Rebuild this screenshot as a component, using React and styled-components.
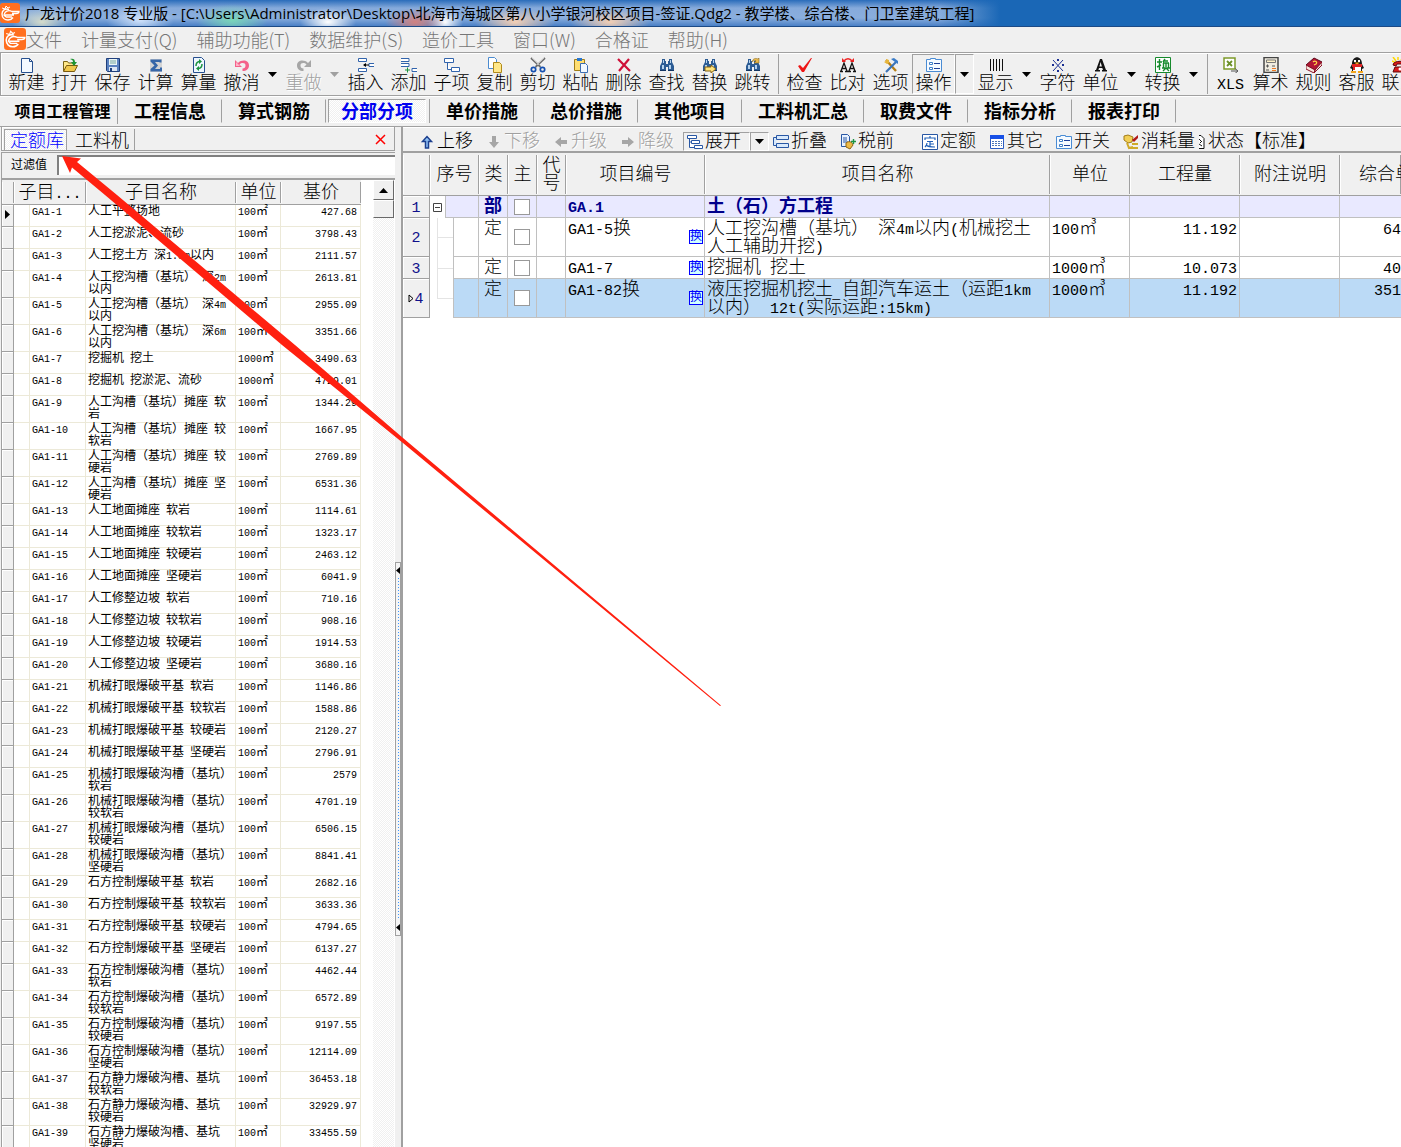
import React, { useState } from 'react'
import styled, { createGlobalStyle, css } from 'styled-components'

const song = '"Liberation Mono", "Noto Sans CJK SC", monospace'
const hei = '"Open Sans", "Noto Sans CJK SC", sans-serif'
const menuFont = '"Noto Sans CJK SC", sans-serif'

const checker = css`
  background: conic-gradient(#fff 25%, #f0f0f0 0 50%, #fff 0 75%, #f0f0f0 0) 0 0 / 2px 2px;
`

const GlobalStyle = createGlobalStyle`
  * { box-sizing: border-box; }
  body {
    margin: 0;
    background: #f0f0f0;
    color: #000;
    font: 300 18px/18px ${song};
    text-spacing-trim: space-all;
  }
  button {
    border: 0;
    padding: 0;
    background: none;
    color: inherit;
    font: inherit;
    white-space: nowrap;
  }
`

const quotas = [
  ['人工平整场地', '㎡', '427.68'],
  ['人工挖淤泥、流砂', '㎥', '3798.43'],
  ['人工挖土方 深1.5m以内', '㎥', '2111.57'],
  ['人工挖沟槽（基坑） 深2m以内', '㎥', '2613.81'],
  ['人工挖沟槽（基坑） 深4m以内', '㎥', '2955.09'],
  ['人工挖沟槽（基坑） 深6m以内', '㎥', '3351.66'],
  ['挖掘机 挖土', '㎥', '3490.63', '1000'],
  ['挖掘机 挖淤泥、流砂', '㎥', '4729.01', '1000'],
  ['人工沟槽（基坑）摊座 软岩', '㎡', '1344.29'],
  ['人工沟槽（基坑）摊座 较软岩', '㎡', '1667.95'],
  ['人工沟槽（基坑）摊座 较硬岩', '㎡', '2769.89'],
  ['人工沟槽（基坑）摊座 坚硬岩', '㎡', '6531.36'],
  ['人工地面摊座 软岩', '㎡', '1114.61'],
  ['人工地面摊座 较软岩', '㎡', '1323.17'],
  ['人工地面摊座 较硬岩', '㎡', '2463.12'],
  ['人工地面摊座 坚硬岩', '㎡', '6041.9'],
  ['人工修整边坡 软岩', '㎡', '710.16'],
  ['人工修整边坡 较软岩', '㎡', '908.16'],
  ['人工修整边坡 较硬岩', '㎡', '1914.53'],
  ['人工修整边坡 坚硬岩', '㎡', '3680.16'],
  ['机械打眼爆破平基 软岩', '㎥', '1146.86'],
  ['机械打眼爆破平基 较软岩', '㎥', '1588.86'],
  ['机械打眼爆破平基 较硬岩', '㎥', '2120.27'],
  ['机械打眼爆破平基 坚硬岩', '㎥', '2796.91'],
  ['机械打眼爆破沟槽（基坑） 软岩', '㎥', '2579'],
  ['机械打眼爆破沟槽（基坑） 较软岩', '㎥', '4701.19'],
  ['机械打眼爆破沟槽（基坑） 较硬岩', '㎥', '6506.15'],
  ['机械打眼爆破沟槽（基坑） 坚硬岩', '㎥', '8841.41'],
  ['石方控制爆破平基 软岩', '㎥', '2682.16'],
  ['石方控制爆破平基 较软岩', '㎥', '3633.36'],
  ['石方控制爆破平基 较硬岩', '㎥', '4794.65'],
  ['石方控制爆破平基 坚硬岩', '㎥', '6137.27'],
  ['石方控制爆破沟槽（基坑） 软岩', '㎥', '4462.44'],
  ['石方控制爆破沟槽（基坑） 较软岩', '㎥', '6572.89'],
  ['石方控制爆破沟槽（基坑） 较硬岩', '㎥', '9197.55'],
  ['石方控制爆破沟槽（基坑） 坚硬岩', '㎥', '12114.09'],
  ['石方静力爆破沟槽、基坑 较软岩', '㎥', '36453.18'],
  ['石方静力爆破沟槽、基坑 较硬岩', '㎥', '32929.97'],
  ['石方静力爆破沟槽、基坑 坚硬岩', '㎥', '33455.59']
]

const items = [
  { kind: '部', code: 'GA.1', name: '土（石）方工程', section: true },
  { kind: '定', code: 'GA1-5换', name: '人工挖沟槽（基坑） 深4m以内(机械挖土人工辅助开挖)', unit: '100㎥', qty: '11.192', price: '64', swap: true },
  { kind: '定', code: 'GA1-7', name: '挖掘机 挖土', unit: '1000㎥', qty: '10.073', price: '40', swap: true },
  { kind: '定', code: 'GA1-82换', name: '液压挖掘机挖土 自卸汽车运土（运距1km以内） 12t(实际运距:15km)', unit: '1000㎥', qty: '11.192', price: '351', swap: true, current: true }
]

const menus = ['文件', '计量支付(Q)', '辅助功能(T)', '数据维护(S)', '造价工具', '窗口(W)', '合格证', '帮助(H)']

const sections = ['工程信息', '算式钢筋', '分部分项', '单价措施', '总价措施', '其他项目', '工料机汇总', '取费文件', '指标分析', '报表打印']

const mainTools = [
  { icon: 'file', label: '新建' },
  { icon: 'open', label: '打开' },
  { icon: 'save', label: '保存' },
  { icon: 'sigma', label: '计算' },
  { icon: 'refresh', label: '算量' },
  { icon: 'undo', label: '撤消', drop: true },
  { icon: 'redo', label: '重做', drop: true, disabled: true },
  { icon: 'insert', label: '插入' },
  { icon: 'add', label: '添加' },
  { icon: 'child', label: '子项' },
  { icon: 'copy', label: '复制' },
  { icon: 'cut', label: '剪切' },
  { icon: 'paste', label: '粘帖' },
  { icon: 'remove', label: '删除' },
  { icon: 'find', label: '查找' },
  { icon: 'replace', label: '替换' },
  { icon: 'jump', label: '跳转', end: true },
  { icon: 'check', label: '检查' },
  { icon: 'compare', label: '比对' },
  { icon: 'options', label: '选项' },
  { icon: 'list', label: '操作', drop: true, pressed: true },
  { icon: 'bars', label: '显示', drop: true },
  { icon: 'mark', label: '字符' },
  { icon: 'letter', label: '单位', drop: true },
  { icon: 'convert', label: '转换', drop: true, end: true },
  { icon: 'xls', label: 'XLS', narrow: true },
  { icon: 'calc', label: '算术' },
  { icon: 'book', label: '规则' },
  { icon: 'penguin', label: '客服' },
  { icon: 'phone', label: '联系' }
]

const gridTools = [
  { icon: 'up', label: '上移' },
  { icon: 'down', label: '下移', disabled: true },
  { icon: 'left', label: '升级', disabled: true },
  { icon: 'right', label: '降级', disabled: true },
  { icon: 'expand', label: '展开', drop: true, pressed: true },
  { icon: 'collapse', label: '折叠' },
  { icon: 'tax', label: '税前', gap: true },
  { icon: 'quota', label: '定额' },
  { icon: 'sheet', label: '其它' },
  { icon: 'list', label: '开关' },
  { icon: 'usage', label: '消耗量' },
  { icon: 'state', label: '状态【标准】', half: true }
]

const binoculars = (
  <g>
    <path d='M3 2h3v2h1v3h2V4h1V2h3v3l2 4v5h-6v-4H7v4H1V9l2-4z' fill='#2c5c94' />
    <path d='M4 3h1v3H4zM11 3h1v3h-1zM3 8h2v4H3zM10 8h2v4h-2z' fill='#b5d2ee' />
    <path d='M1 13h6v1H1zM9 13h6v1H9z' fill='#123462' />
  </g>
)

const icons = {
  file: <path d='M2.500 1.500h8l3 3v11h-11zM10.500 1.500v3h3' fill='#f4f9ff' stroke='#27508f' />,
  open: (
    <g>
      <path d='M1.500 14V4.500h4l1 1.500h6v2.500' fill='#ffe88a' stroke='#7a6417' />
      <path d='M1.500 14.500l3-6h11l-3 6z' fill='#f0c84c' stroke='#7a5a10' />
      <path d='M8 2c3-1 5 0 5 3h2l-3 4-3-4h2c0-2-1-2-3-3z' fill='#1f9434' />
    </g>
  ),
  save: (
    <g>
      <path d='M1.500 1.500h13v13h-12l-1-1z' fill='#5a82c0' stroke='#1f3f7c' />
      <path d='M4 2h8v6H4z' fill='#eaf5f5' />
      <path d='M5 4h6M5 6h6' stroke='#79a7a0' />
      <path d='M4 10h8v4H4z' fill='#dde7f5' />
      <path d='M5 11h2v3H5z' fill='#1f3f7c' />
    </g>
  ),
  sigma: (
    <g>
      <path d='M2 2h12v13H2z' fill='#d4d4d4' />
      <path d='M2.500 2.500h11v3h-2V5H7l3 3.500L7 12h5v-1.500h2v4H2.500V12l4-3.500-4-4z' fill='#3767a8' />
    </g>
  ),
  refresh: (
    <g>
      <path d='M2.500.5h8l3 3v12h-11z' fill='#eef6ff' stroke='#27508f' />
      <path d='M5 9c0-3 1-4 3-4.500M11 7c0 3-1 4-3 4.500' fill='none' stroke='#1c9440' strokeWidth='1.500' />
      <path d='M8 2l3 2.500L8 7zM8 9l-3 2.500L8 14z' fill='#1c9440' />
    </g>
  ),
  undo: (
    <g>
      <path d='M1 3v7h7L5.500 7.500c2-2 6-2 6 1 0 2-1 3-3 3v2.500c4 0 6.500-2 6.500-5.500C15 3 8 2 4 6z' fill='#f4628a' />
      <path d='M2 5v4h4z' fill='#ffb3c8' />
    </g>
  ),
  redo: <path d='M15 3v7H8l2.500-2.500c-2-2-6-2-6 1 0 2 1 3 3 3v2.500C3.500 14 1 12 1 8.500 1 3 8 2 12 6z' fill='#a6a6a6' />,
  insert: (
    <g fill='#fff' stroke='#3264ac'>
      <path d='M.5 1.500h8v3h-8zM.5 11.500h8v3h-8zM16 6.500h-5v3h5' />
      <path d='M6 8h5' stroke='#000' />
      <path d='M5 8l3-2v4z' fill='#000' stroke='none' />
    </g>
  ),
  add: (
    <g fill='#fff' stroke='#3264ac'>
      <path d='M0 1.500h8v3H0M0 9.500h8v-3H0M16 11.500h-5v3h5' />
      <path d='M4 13h5M6.500 10.500v5' stroke='#1c9440' />
    </g>
  ),
  child: <path d='M.5 1.500h9v4h-9zM7.500 10.500h8v4h-8zM3.500 5.500v7h4' fill='#fff' stroke='#3264ac' />,
  copy: (
    <g>
      <path d='M1.500.5h6l2 2v9h-8z' fill='#fff' stroke='#4b8bd0' />
      <path d='M6.500 5.500h6l2 2v8h-8z' fill='#ffe88a' stroke='#b08a1c' />
    </g>
  ),
  cut: (
    <g fill='none'>
      <path d='M1 1l9.500 9M15 1L5.500 10' stroke='#6d6d6d' strokeWidth='1.800' />
      <path d='M2 1l7 7M14 1L7 8' stroke='#e3e3e3' strokeWidth='.7' />
      <circle cx='3.500' cy='12.500' r='2.200' stroke='#1550b0' strokeWidth='1.700' />
      <circle cx='12.500' cy='12.500' r='2.200' stroke='#1550b0' strokeWidth='1.700' />
    </g>
  ),
  paste: (
    <g>
      <path d='M1.500 2.500h10v11h-10z' fill='#ffdf72' stroke='#a17d18' />
      <path d='M4 1h5v3H4z' fill='#2876cf' />
      <path d='M7.500 6.500h5l2 2v7h-7z' fill='#f2f8ff' stroke='#3d6db2' />
    </g>
  ),
  remove: <path d='M2 2l12 12M13 2L3 14' stroke='#cf1038' strokeWidth='2.200' fill='none' />,
  find: binoculars,
  replace: <g>{binoculars}<path d='M3 10h6V8l5 4-5 4v-2H3z' fill='#ffe37a' stroke='#866314' /></g>,
  jump: <g>{binoculars}<path d='M7 5c1-4 4-4 6-3l1-1v5H9l2-2c-2-1-3 0-4 1z' fill='#e9b94c' stroke='#8b6a1d' strokeWidth='.6' /></g>,
  check: <path d='M1 9l2-1 3 3 8-10h1L7 15H5z' fill='#ed1616' />,
  compare: (
    <g>
      <path d='M4 4c2-3 6-3 8 0' fill='none' stroke='#ee2222' strokeWidth='1.500' />
      <path d='M2 1v4h4zM14 1v4h-4z' fill='#ee2222' />
      <path d='M1 14l3-8 3 8M2 11.500h4M9 14l3-8 3 8M10 11.500h4M0 14.500h3M5 14.500h3M8 14.500h3M13 14.500h3' fill='none' stroke='#111' strokeWidth='1.300' />
    </g>
  ),
  options: (
    <g fill='none'>
      <path d='M3 3l10 11' stroke='#b77f16' strokeWidth='2.400' />
      <path d='M13 5L3 15' stroke='#3b74b8' strokeWidth='2.200' />
      <path d='M1 5l2-1V2l3 1v3L4 7z' fill='#e7b538' />
      <path d='M8 2l3-1 4 3v3l-3-2z' fill='#3a7cc8' />
    </g>
  ),
  list: (
    <g>
      <path d='M.5 2.500h4v-1h5v1h6v12H.5z' fill='#f5faff' stroke='#4a8cd4' />
      <path d='M3.500 5.500h3v2h-3zM3.500 10.500h3v2h-3z' fill='#fff' stroke='#3f7fc8' />
      <path d='M8 6.500h6M8 11.500h6' stroke='#1e3f98' />
    </g>
  ),
  bars: <path d='M2.500 2v12M5.500 2v12M8.500 2v12M11.500 2v12M14.500 2v12' stroke='#111' />,
  mark: (
    <g>
      <path d='M3 3l10 11M13 3L3 14' stroke='#1b2f93' />
      <path d='M7 2h2v2H7zM7 13h2v2H7zM2 7h2v2H2zM12 7h2v2h-2z' fill='#1b2f93' />
    </g>
  ),
  letter: <path d='M7 2h2l4 11h1v1.500H9V13h1l-.7-2H6l-.6 2H7v1.500H2V13h1zM7.600 5L6.400 9.500h2.500z' fill='#111' fillRule='evenodd' />,
  convert: (
    <g>
      <path d='M.5.5h15v15H.5z' fill='#fff' stroke='#168a2c' />
      <path d='M2 5h5M4.500 2v11M2 10l4-2M10 2L8 5M9 4h4M8.500 6v5M13.500 6v5M8 6h6M11 6v4M7 11h8M11 11l-3 3M11 11l3 3' stroke='#168a2c' strokeWidth='1.400' fill='none' />
    </g>
  ),
  xls: (
    <g>
      <path d='M1 1h11v11H1z' fill='#fff' stroke='#7d9b2a' strokeWidth='1.500' />
      <path d='M4 4l5 5M9 4L4 9' stroke='#6a9028' strokeWidth='1.800' />
      <path d='M8 14h6M12 11.500l3 2.500-3 2.500' stroke='#555' fill='none' />
    </g>
  ),
  calc: (
    <g>
      <path d='M1 .5h14v15H1z' fill='#f0ece0' stroke='#454545' strokeWidth='1.500' />
      <path d='M3.500 3h9v2.500h-9z' fill='#fff3c8' stroke='#777' />
      <path d='M3 9h3M4.500 7.500v3M3 13h3M9 9h3' stroke='#555' />
      <path d='M9 11.500h4M9 13.500h4' stroke='#f07820' />
    </g>
  ),
  book: (
    <g>
      <path d='M0 8l8-7 8 4-7 8z' fill='#b31634' stroke='#5b0918' />
      <path d='M0 8v4l8 4 1-3zM9 13l7-8v3l-8 8z' fill='#f6e6dc' stroke='#8b1226' />
      <path d='M7 5c2-2 5 0 3 2L8 8' stroke='#ffd34a' fill='none' strokeWidth='1.300' />
    </g>
  ),
  penguin: (
    <g>
      <path d='M3 7c0-9 10-9 10 0l2 4-2 1v2H3v-2l-2-1z' fill='#191919' />
      <path d='M4 9h8v5H4z' fill='#fff' />
      <path d='M3 7h10v3H6v3H4v-3H3z' fill='#e02222' />
      <path d='M5 3h2v2H5zM9 3h2v2H9z' fill='#fff' />
      <path d='M5 5.500h6L8 7.500zM2 14h5v2H2zM9 14h5v2H9z' fill='#f4a51c' />
    </g>
  ),
  phone: (
    <g>
      <path d='M1 0l3 4M6 0v3M0 4l4 2M11 0L9 3' stroke='#ffd800' strokeWidth='1.500' />
      <path d='M1 8c0-5 14-5 14 0l-3 1-1-2H5L4 9zM3 10h10l2 5H1z' fill='#d81a1a' stroke='#5e0808' />
      <circle cx='8' cy='12' r='1.500' fill='#fff' />
    </g>
  ),
  up: <path d='M6.500 14V7.500H3.500L8 2.500l4.500 5h-3V14z' fill='#8fc0f4' stroke='#1c3f8e' strokeWidth='1.500' />,
  down: <path d='M6 2v6H3l5 6 5-6h-3V2z' fill='#a6a6a6' />,
  left: <path d='M14 6H8V3L2 8l6 5v-3h6z' fill='#a6a6a6' />,
  right: <path d='M2 6h6V3l6 5-6 5v-3H2z' fill='#a6a6a6' />,
  expand: <path d='M.5 1.500h9v3h-9zM4.500 6.500h8v3h-8zM7.500 11.500h8v3h-8zM2.500 4.500v9h5M2.500 8h2' fill='#fff' stroke='#2857a4' />,
  collapse: <path d='M3.500 1.500h12v4h-12zM3.500 9.500h12v4h-12zM3.500 3.500h-3v8h3' fill='#d8e9fc' stroke='#2857a4' />,
  tax: (
    <g>
      <path d='M1.500.5h6l2 2v10h-8z' fill='#e8f2ff' stroke='#2857a4' />
      <path d='M3 4h4M3 6h4M3 8h5' stroke='#2857a4' />
      <path d='M6 9c2-2 6-2 7 2l-3 4-4-2z' fill='#edb945' stroke='#8d6512' />
      <path d='M11 7.500h5M13.500 5v5' stroke='#1c9440' strokeWidth='1.400' />
    </g>
  ),
  quota: (
    <g>
      <path d='M.5.5h15v15H.5z' fill='#fff' stroke='#2857a4' />
      <path d='M8 2v2M3 6V4h10v2M5 7.500h6M8 7.500V13M8 10h4M5 9c0 2-1 3-2 4M4 11c2 2 5 2 9 2' fill='none' stroke='#2060b8' strokeWidth='1.200' />
    </g>
  ),
  sheet: (
    <g>
      <path d='M1.500 1.500h13v13h-13z' fill='#fff' stroke='#2c5cc0' />
      <path d='M1 1h14v4H1z' fill='#1750e6' />
      <path d='M3 7.500h10M3 9.500h10M3 11.500h10' stroke='#4c76b8' strokeDasharray='2 1' />
    </g>
  ),
  usage: (
    <g>
      <path d='M1 2l4-1 5 2-1 5-4 1-4-3z' fill='#f2cf55' stroke='#a27c18' />
      <path d='M9 6l6-5v3l-4 4z' fill='#b01919' />
      <path d='M4 9l2 5 4-1M9 10h6M8 14h7' stroke='#cfaa2a' strokeWidth='2' fill='none' />
    </g>
  ),
  state: <path d='M0 1.500h2l3 3v10H0M0 5l2 2M3 7L1 9M0 10l3 2' fill='#fff' stroke='#111' />
}

// Latin runs are set one step smaller so that a letter is half as wide as a Chinese one
function Song ({ children }) {
  return children.split(/([\x20-\x7e]+)/).map((part, i) => (
    i % 2 ? <Latin key={i}>{part}</Latin> : part
  ))
}

function Icon ({ name }) {
  return (
    <svg width='16' height='16' viewBox='0 0 16 16' preserveAspectRatio='xMinYMin slice' aria-hidden='true'>
      {icons[name]}
    </svg>
  )
}

function Logo ({ size }) {
  return (
    <svg width={size} height={size} viewBox='0 0 20 20' aria-hidden='true'>
      <rect width='20' height='20' rx='3' fill='#ff6f1f' />
      <path d='M9 6.500c-4-1.500-7 1-7 4.500 0 4 3 6 6 6 2 0 4-1 5-2.500' fill='none' stroke='#fff' strokeWidth='1.400' />
      <path d='M5 9.500c2-2 5-2 7-1h7c0 1.500-1 2-3 2h-4M5 12h9M6 14h6M5 9.500L4 12l2 2' fill='none' stroke='#fff' strokeWidth='1.300' />
      <path d='M2 5l3 1 1-3 2 2 2-1' fill='none' stroke='#fff' />
    </svg>
  )
}

function Caret () {
  return <svg width='9' height='5' viewBox='0 0 9 5' aria-hidden='true'><path d='M0 0h9L4.500 5z' fill='currentColor' /></svg>
}

function Tools ({ list, Button }) {
  return list.map(t => (
    <ToolGroup key={t.label} $end={t.end} $gap={t.gap}>
      <Button disabled={t.disabled} $pressed={t.pressed} $half={t.half} $narrow={t.narrow}>
        <Icon name={t.icon} />
        <span><Song>{t.label}</Song></span>
      </Button>
      {t.drop && <DropButton aria-label={t.label + '选项'} disabled={t.disabled} $pressed={t.pressed}><Caret /></DropButton>}
    </ToolGroup>
  ))
}

function QuotaPanel () {
  const [tab, setTab] = useState('定额库')
  return (
    <Side>
      <SideHead>
        {['定额库', '工料机'].map(t => (
          <SideTab key={t} $active={t === tab} onClick={() => setTab(t)}>{t}</SideTab>
        ))}
        <CloseButton aria-label='关闭'>
          <svg width='11' height='11' viewBox='0 0 11 11' aria-hidden='true'><path d='M1 1l9 9M10 1l-9 9' stroke='#f00' strokeWidth='1.500' /></svg>
        </CloseButton>
      </SideHead>
      <Filter>
        <label htmlFor='filter'>过滤值</label>
        <input id='filter' type='text' />
      </Filter>
      <SideBody>
        <QuotaTable>
          <colgroup>
            <col width='12' /><col width='16' /><col width='56' /><col width='150' /><col width='45' /><col width='80' />
          </colgroup>
          <thead>
            <tr>
              <HeadCell />
              <HeadCell colSpan='2'><Song>子目...</Song></HeadCell>
              <HeadCell>子目名称</HeadCell>
              <HeadCell>单位</HeadCell>
              <HeadCell>基价</HeadCell>
            </tr>
          </thead>
          <tbody>
            {quotas.map(([name, unit, price, count = '100'], i) => (
              <tr key={i}>
                <QuotaMark>
                  {i === 0 && <svg width='5' height='9' viewBox='0 0 5 9' aria-hidden='true'><path d='M0 0v9l5-4.500z' /></svg>}
                </QuotaMark>
                <td />
                <td><Song>{'GA1-' + (i + 1)}</Song></td>
                <td><Song>{name}</Song></td>
                <td><Song>{count + unit}</Song></td>
                <PriceCell><Song>{price}</Song></PriceCell>
              </tr>
            ))}
          </tbody>
        </QuotaTable>
        <ScrollTrack>
          <ScrollButton aria-label='向上滚动'>
            <svg width='9' height='5' viewBox='0 0 9 5' aria-hidden='true'><path d='M0 5h9L4.500 0z' /></svg>
          </ScrollButton>
          <ScrollThumb />
        </ScrollTrack>
      </SideBody>
    </Side>
  )
}

function ItemGrid () {
  return (
    <ItemTable>
      <colgroup>
        <col width='27' /><col width='49' /><col width='29' /><col width='29' /><col width='29' />
        <col width='139' /><col width='345' /><col width='80' /><col width='110' /><col width='100' /><col />
      </colgroup>
      <thead>
        <tr>
          {['', '序号', '类', '主', '代号', '项目编号', '项目名称', '单位', '工程量', '附注说明'].map(h => (
            <HeadCell key={h} $tall>{h}</HeadCell>
          ))}
          <LastHead>综合单价</LastHead>
        </tr>
      </thead>
      <tbody>
        {items.map((item, i) => (
          <ItemRow key={item.code} $section={item.section} $current={item.current}>
            <NumberCell>
              {item.current && <svg width='6' height='9' viewBox='0 0 6 9' aria-hidden='true'><path d='M1 1v7l4-3.500z' fill='none' stroke='#000' /></svg>}
              <Song>{String(i + 1)}</Song>
            </NumberCell>
            <TreeCell $section={item.section} $last={item.current}>
              {item.section && (
                <svg width='9' height='9' viewBox='0 0 9 9' aria-hidden='true'><path d='M.5.5h8v8h-8zM2 4.500h5' fill='#fff' stroke='#444' /></svg>
              )}
            </TreeCell>
            <KindCell>{item.kind}</KindCell>
            <CheckCell><input type='checkbox' aria-label={item.code} /></CheckCell>
            <td />
            <CodeCell>
              <Song>{item.code}</Song>
              {item.swap && <SwapBadge>换</SwapBadge>}
            </CodeCell>
            <td><Song>{item.name}</Song></td>
            <td><Song>{item.unit || ''}</Song></td>
            <AmountCell><Song>{item.qty || ''}</Song></AmountCell>
            <td />
            <AmountCell $last><Song>{item.price || ''}</Song></AmountCell>
          </ItemRow>
        ))}
      </tbody>
    </ItemTable>
  )
}

export default function App () {
  const [section, setSection] = useState('分部分项')
  return (
    <Window>
      <GlobalStyle />
      <TitleBar>
        <Logo size={20} />
        <h1>广龙计价2018 专业版 - [C:\Users\Administrator\Desktop\北海市海城区第八小学银河校区项目-签证.Qdg2 - 教学楼、综合楼、门卫室建筑工程]</h1>
      </TitleBar>
      <MenuBar>
        <Logo size={22} />
        {menus.map(m => <button key={m}>{m}</button>)}
      </MenuBar>
      <Toolbar>
        <Tools list={mainTools} Button={ToolButton} />
      </Toolbar>
      <SectionBar>
        <ManageButton>项目工程管理</ManageButton>
        {sections.map(s => (
          <SectionTab key={s} $active={s === section} onClick={() => setSection(s)}>{s}</SectionTab>
        ))}
      </SectionBar>
      <Workspace>
        <QuotaPanel />
        <Splitter>
          <Grip>
            <svg width='4' height='7' viewBox='0 0 4 7' aria-hidden='true'><path d='M4 0v7L0 3.500z' /></svg>
            <GripDots />
            <svg width='4' height='7' viewBox='0 0 4 7' aria-hidden='true'><path d='M4 0v7L0 3.500z' /></svg>
          </Grip>
        </Splitter>
        <Main>
          <GridToolbar>
            <Tools list={gridTools} Button={GridButton} />
          </GridToolbar>
          <ItemGrid />
        </Main>
      </Workspace>
      <Pointer width='724' height='710' viewBox='0 0 724 710' aria-hidden='true'>
        <path d='M62 156L81 158.500 77 162 117 195 295 345 403 438 721 705.500 720 706 403 443 282 345 105 195 72 167.500 70 173z' fill='#ff2010' />
      </Pointer>
    </Window>
  )
}

const Window = styled.div`
  position: relative;
  display: flex;
  flex-direction: column;
  height: 100vh;
  overflow: hidden;
`

const Latin = styled.span`
  font-size: calc(1em * 5 / 6);
  line-height: 0;
`

const TitleBar = styled.header`
  display: flex;
  align-items: center;
  flex: none;
  gap: 5px;
  height: 27px;
  border-bottom: 1px solid #1c4a86;
  background:
    radial-gradient(ellipse 30px 14px at 42px 22px, #d5dccb, transparent),
    radial-gradient(ellipse 34px 16px at 140px 20px, #cfe2fb, transparent),
    radial-gradient(ellipse 36px 16px at 232px 20px, #79d5b8, transparent),
    radial-gradient(ellipse 28px 14px at 328px 22px, #fff, transparent),
    radial-gradient(ellipse 30px 14px at 415px 22px, #d2817f, transparent),
    radial-gradient(ellipse 18px 14px at 445px 22px, #fff, transparent),
    radial-gradient(ellipse 40px 14px at 515px 22px, #f4cfb4, transparent),
    radial-gradient(ellipse 40px 14px at 610px 22px, #f4cfb4, transparent),
    linear-gradient(to right, transparent 940px, #1a67b6 1000px),
    linear-gradient(#2a6cba, #86aadb 8px, #8aaedd 18px, #4a80c6);

  h1 {
    margin: 0;
    font: 400 15px/20px ${hei};
    white-space: nowrap;
  }
`

const MenuBar = styled.nav`
  display: flex;
  align-items: center;
  flex: none;
  gap: 19px;
  height: 25px;
  padding: 0 0 2px 4px;
  color: #767676;
  font-family: ${menuFont};

  svg {
    margin-right: -19px;
  }
`

const Toolbar = styled.div`
  display: flex;
  flex: none;
  height: 44px;
  padding: 1px 0 1px 4px;
  border: 1px solid #a0a0a0;
  border-width: 1px 0 1px 1px;
  box-shadow: inset 1px 1px #fff, 0 1px #fff;
  overflow: hidden;
`

const ToolGroup = styled.div`
  display: flex;
  flex: none;
  ${props => props.$end && css`
    margin-right: 4px;
    padding-right: 4px;
    border-right: 1px solid #a0a0a0;
  `}
  ${props => props.$gap && css`
    margin-right: 15px;
  `}
`

const pressedBox = css`
  border: 1px solid #a0a0a0;
  border-right-color: #fff;
  border-bottom-color: #fff;
`

const ToolButton = styled.button`
  display: flex;
  flex-direction: column;
  align-items: center;
  gap: 2px;
  min-width: ${props => props.$narrow ? 37 : 43}px;
  padding-top: 2px;
  ${props => props.$pressed ? pressedBox : css`border: 1px solid transparent;`}

  &:disabled {
    color: #a0a0a0;
    text-shadow: 1px 1px #fff;
  }
`

const GridButton = styled.button`
  display: flex;
  align-items: center;
  gap: ${props => props.$half ? '3px' : '2px'};
  min-width: 67px;
  padding: 0 2px 0 3px;
  ${props => props.$pressed ? pressedBox : css`border: 0 solid transparent; border-width: 0 1px;`}
  ${props => props.$half && css`
    padding: 0;
    svg { width: 6px; }
  `}

  &:disabled {
    color: #a0a0a0;
    text-shadow: 1px 1px #fff;
  }
`

const DropButton = styled.button`
  display: flex;
  align-items: center;
  justify-content: center;
  width: 19px;
  ${props => props.$pressed && pressedBox}

  &:disabled {
    color: #a0a0a0;
  }
`

const SectionBar = styled.div`
  display: flex;
  align-items: center;
  flex: none;
  height: 31px;
  padding: 2px 0 2px 4px;
  border-bottom: 1px solid #a0a0a0;
  font-weight: 700;
`

const ManageButton = styled.button`
  align-self: stretch;
  width: 114px;
  padding: 3px 0 0 4px;
  border-right: 1px solid #a0a0a0;
  font-size: 16px;
`

const SectionTab = styled.button`
  height: 24px;
  padding: 3px 15px 0;
  border: 1px solid transparent;
  border-right-color: #a0a0a0;
  ${props => props.$active && css`
    ${checker}
    margin: 0 4px 0 2px;
    padding: 3px 12px 0;
    border-color: #a0a0a0 #fff #fff #a0a0a0;
    box-shadow: 3px 0 #f0f0f0, 4px 0 #a0a0a0;
    color: #0000f0;
  `}
`

const Workspace = styled.div`
  display: flex;
  flex: 1;
  min-height: 0;
  padding-left: 1px;
`

const Side = styled.aside`
  display: flex;
  flex-direction: column;
  flex: none;
  width: 394px;
  min-height: 0;
`

const SideHead = styled.div`
  display: flex;
  flex: none;
  height: 24px;
  padding: 2px 2px 0;
  border: 1px solid #a0a0a0;
  border-top: 0;
  box-shadow: inset 1px 1px #fff;
`

const SideTab = styled.button`
  width: ${props => props.$active ? 63 : 68}px;
  padding: 4px 0 0 3px;
  border-right: 1px solid #a0a0a0;
  ${props => props.$active && css`
    ${checker}
    padding-top: 3px;
    border: 1px solid #a0a0a0;
    border-bottom: 0;
    color: #00f;
  `}
`

const CloseButton = styled.button`
  width: 24px;
  margin-left: auto;
`

const Filter = styled.div`
  display: flex;
  align-items: center;
  flex: none;
  height: 27px;
  margin-top: 1px;
  padding: 0 0 2px 9px;
  border: 1px solid #a0a0a0;
  border-right: 0;
  font: 400 12px/16px ${hei};

  input {
    flex: 1;
    height: 20px;
    margin-left: 10px;
    border: 2px solid #808080;
    border-width: 2px 0 0 2px;
    background: #fff;
    font: inherit;
    outline: 0;
  }
`

const SideBody = styled.div`
  display: flex;
  flex: 1;
  justify-content: space-between;
  align-items: flex-start;
  min-height: 0;
  overflow: hidden;
  border-left: 1px solid #a0a0a0;
  border-top: 1px solid #a0a0a0;
  background: #fff;
`

const QuotaTable = styled.table`
  width: 359px;
  border-spacing: 0;
  table-layout: fixed;
  font-size: 12px;
  line-height: 12px;
  font-weight: 400;

  td {
    height: 22px;
    padding: 1px 0 1px 2px;
    border: 1px solid #ece9d8;
    border-width: 0 1px 1px 0;
    vertical-align: top;
  }
`

const HeadCell = styled.th`
  height: ${props => props.$tall ? 43 : 25}px;
  padding: 1px 3px 0;
  border-bottom: 1px solid #a0a0a0;
  background:
    linear-gradient(#a0a0a0, #a0a0a0) right 2px / 1px calc(100% - 3px) no-repeat,
    linear-gradient(#fff, #fff) left 2px / 1px calc(100% - 3px) no-repeat,
    #f0f0f0;
  font-size: 18px;
  line-height: 18px;
  font-weight: 300;
`

const LastHead = styled(HeadCell).attrs({ $tall: true })`
  padding-left: 19px;
  text-align: left;
  white-space: nowrap;
  overflow: hidden;
`

const QuotaMark = styled.th`
  padding: 0 2px;
  border: 1px solid #a0a0a0;
  border-width: 0 1px 1px 0;
  background: #f0f0f0;
  box-shadow: inset 1px 1px #fff;
`

const PriceCell = styled.td`
  && {
    padding-right: 3px;
    text-align: right;
  }
`

const ScrollTrack = styled.div`
  ${checker}
  align-self: stretch;
  width: 21px;
  margin-right: 1px;
`

const raised = css`
  display: flex;
  align-items: center;
  justify-content: center;
  width: 100%;
  border: 1px solid #fff;
  border-right-color: #696969;
  border-bottom-color: #696969;
  background: #f0f0f0;
`

const ScrollButton = styled.button`
  ${raised}
  height: 20px;
`

const ScrollThumb = styled.div`
  ${raised}
  height: 18px;
`

const Splitter = styled.div`
  display: flex;
  flex-direction: column;
  flex: none;
  width: 6px;

  &::before {
    content: '';
    flex: 436;
  }

  &::after {
    content: '';
    flex: 211;
  }
`

const Grip = styled.div`
  display: flex;
  flex-direction: column;
  align-items: center;
  height: 374px;
  padding: 4px 0;
  border: 1px solid #a0a0a0;
  background: #f5f5f5;
`

const GripDots = styled.div`
  flex: 1;
  width: 1px;
  margin: 4px 0;
  background: linear-gradient(#3c96ff 1px, transparent 1px) 0 0 / 1px 3px;
`

const Main = styled.main`
  flex: 1;
  min-width: 0;
  overflow: hidden;
  border-left: 2px solid #a0a0a0;
  background: #fff;
`

const GridToolbar = styled.div`
  display: flex;
  height: 26px;
  padding: 4px 0 0 12px;
  border-top: 1px solid #fff;
  border-bottom: 2px solid #a0a0a0;
  background: #f0f0f0;
`

const ItemTable = styled.table`
  width: 100%;
  border-spacing: 0;
  table-layout: fixed;

  td {
    height: 22px;
    padding: 2px 2px 0;
    border: 1px solid #c0c0c0;
    border-width: 0 1px 1px 0;
    vertical-align: top;
  }

  td:last-child {
    border-right: 0;
  }
`

const ItemRow = styled.tr`
  --row: ${props => props.$section ? '#e9e9ff' : props.$current ? '#bbdaf6' : '#fff'};
  background: var(--row);
  ${props => props.$section && css`
    color: #00008b;
    font-weight: 700;
  `}
`

const NumberCell = styled.th`
  padding: 0;
  border: 1px solid #a0a0a0;
  border-width: 0 1px 1px 0;
  background: #f0f0f0;
  box-shadow: inset 1px 1px #fff;
  color: #10108b;
  font-weight: 300;
  white-space: nowrap;
`

const TreeCell = styled.td`
  && {
    padding: 0 0 0 3px;
    border-bottom: 0;
    vertical-align: middle;
    line-height: 9px;
    background:
      ${props => !props.$section && css`
        linear-gradient(#e4e4e4, #e4e4e4) 7px 50% / 16px 1px no-repeat,
        linear-gradient(#e4e4e4, #e4e4e4) 7px 0 / 1px ${props.$last ? '50%' : '100%'} no-repeat,
      `}
      linear-gradient(to right, #fff ${props => props.$section ? 15 : 23}px, #c0c0c0 0 ${props => props.$section ? 16 : 24}px, transparent 0),
      linear-gradient(to top, #c0c0c0 1px, var(--row) 0);
  }
`

const KindCell = styled.td`
  text-align: center;
`

const CheckCell = styled.td`
  && {
    padding: 0;
    vertical-align: middle;
    text-align: center;
    line-height: 0;
  }

  input {
    appearance: none;
    width: 16px;
    height: 16px;
    margin: 0;
    border: 1px solid #999;
    background: #fff;
  }
`

const CodeCell = styled.td`
  position: relative;
`

const SwapBadge = styled.span`
  position: absolute;
  top: 50%;
  right: 1px;
  width: 14px;
  height: 14px;
  margin-top: -7px;
  border: 1px solid #00f;
  background: #d0ffff;
  color: #00f;
  font-size: 12px;
  line-height: 12px;
  font-weight: 400;
`

const AmountCell = styled.td`
  text-align: right;
  && {
    padding-right: ${props => props.$last ? 0 : 2}px;
  }
`

const Pointer = styled.svg`
  position: absolute;
  top: 0;
  left: 0;
  pointer-events: none;
`
